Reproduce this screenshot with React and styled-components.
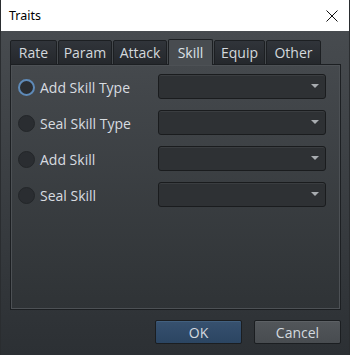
import styled, { createGlobalStyle } from "styled-components";

const GlobalStyle = createGlobalStyle`
    html, body {
        margin: 0;
        padding: 0;
        background: #2c3033;
    }
    body {
        font-family: "Open Sans", "Noto Sans", sans-serif;
    }
`

const Window = styled.div`
    width: 350px;
    height: 355px;
    display: flex;
    flex-direction: column;
    box-sizing: border-box;
    border-left: 1px solid #2a2d30;
    border-right: 1px solid #2a2d30;
    overflow: hidden;
`

const TitleBar = styled.div`
    height: 31px;
    flex: none;
    background: #ffffff;
    display: flex;
    align-items: center;
    justify-content: space-between;
    padding: 0 8px 0 8px;
    font-family: "Noto Sans", sans-serif;
    font-size: 12.5px;
    color: #000000;
`

const CloseButton = styled.div`
    width: 14px;
    height: 14px;
    display: flex;
    margin-right: 2px;
`

const Body = styled.div`
    flex: 1;
    display: flex;
    flex-direction: column;
    padding: 9px 9px 0 9px;
    background: linear-gradient(#474b4f, #2c3034);
`

const TabBar = styled.div`
    display: flex;
    align-items: flex-end;
    height: 25px;
`

const Tab = styled.div`
    box-sizing: border-box;
    height: ${(p) => (p.active ? "26px" : "25px")};
    width: ${(p) => p.w}px;
    display: flex;
    align-items: center;
    justify-content: center;
    font-size: 14px;
    font-weight: 500;
    color: ${(p) => (p.active ? "#dde2e7" : "#d3d8dd")};
    background: ${(p) => (p.active ? "#484c50" : "linear-gradient(#30343a, #25282c)")};
    border: 1px solid #1c1f22;
    border-bottom: ${(p) => (p.active ? "none" : "1px solid #1c1f22")};
    border-radius: 2px 2px 0 0;
    margin-right: 1px;
    position: relative;
    z-index: ${(p) => (p.active ? 2 : 1)};
    padding-bottom: ${(p) => (p.active ? "1px" : "0")};
`

const Panel = styled.div`
    box-sizing: border-box;
    width: 331px;
    height: 246px;
    margin-top: -1px;
    border: 1px solid #1c1f22;
    box-shadow: inset 0 0 0 1px #4d5155;
    background: linear-gradient(#45494d, #2f3336);
    padding: 9px 14px 0 7px;
    display: flex;
    flex-direction: column;
    gap: 12px;
`

const Row = styled.div`
    display: flex;
    align-items: center;
    justify-content: space-between;
    height: 24px;
`

const RadioLabel = styled.label`
    display: flex;
    align-items: center;
    gap: 5px;
    font-size: 14px;
    font-weight: 500;
    color: #d8dce0;
    margin-top: 2px;
`

const RadioCircle = styled.span`
    box-sizing: border-box;
    width: 17px;
    height: 17px;
    border-radius: 50%;
    background: #2a2d31;
    border: ${(p) => (p.focused ? "2px solid #5e8ab8" : "1px solid #232629")};
`

const Combo = styled.div`
    box-sizing: border-box;
    width: 168px;
    height: 25px;
    background: #2e3134;
    border: 1px solid #1a1c1e;
    border-radius: 3px;
    box-shadow: inset 0 1px 0 #3a3d40;
    display: flex;
    align-items: center;
    justify-content: flex-end;
    padding-right: 6px;
`

const Arrow = styled.span`
    width: 0;
    height: 0;
    border-left: 4px solid transparent;
    border-right: 4px solid transparent;
    border-top: 4px solid #a8acb0;
`

const Footer = styled.div`
    display: flex;
    justify-content: flex-end;
    gap: 12px;
    padding: 10px 0 0 0;
    margin-right: -1px;
`

const Button = styled.button`
    box-sizing: border-box;
    width: 87px;
    height: 24px;
    font-family: inherit;
    font-size: 14px;
    color: #d3d9df;
    border: 1px solid #1b1e21;
    border-radius: 2px;
    background: ${(p) => (p.primary ? "linear-gradient(#37516f, #2b4562)" : "linear-gradient(#52565a, #484c50)")};
    box-shadow: inset 0 1px 0 ${(p) => (p.primary ? "#42607f" : "#5d6165")};
    padding: 0;
`

const tabs = [
    { name: "Rate", w: 47 },
    { name: "Param", w: 54 },
    { name: "Attack", w: 54 },
    { name: "Skill", w: 45, active: true },
    { name: "Equip", w: 51 },
    { name: "Other", w: 55 },
]

const rows = ["Add Skill Type", "Seal Skill Type", "Add Skill", "Seal Skill"]

export default function App() {
    return (
        <>
            <GlobalStyle />
            <Window>
                <TitleBar>
                    <span>Traits</span>
                    <CloseButton>
                        <svg width="14" height="14" viewBox="0 0 14 14">
                            <path d="M1.5 1.5 L12.5 12.5 M12.5 1.5 L1.5 12.5" stroke="#111" strokeWidth="1" fill="none" />
                        </svg>
                    </CloseButton>
                </TitleBar>
                <Body>
                    <TabBar>
                        {tabs.map((t) => (
                            <Tab key={t.name} w={t.w} active={t.active}>{t.name}</Tab>
                        ))}
                    </TabBar>
                    <Panel>
                        {rows.map((r, i) => (
                            <Row key={r}>
                                <RadioLabel>
                                    <RadioCircle focused={i === 0} />
                                    {r}
                                </RadioLabel>
                                <Combo>
                                    <Arrow />
                                </Combo>
                            </Row>
                        ))}
                    </Panel>
                    <Footer>
                        <Button primary>OK</Button>
                        <Button>Cancel</Button>
                    </Footer>
                </Body>
            </Window>
        </>
    );
}
